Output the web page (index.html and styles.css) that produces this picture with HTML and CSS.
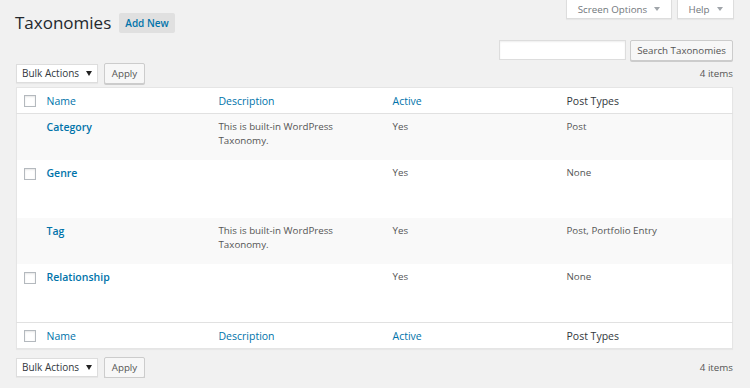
FILE: index.html
```html
<!DOCTYPE html>
<html lang="en">
<head>
    <meta charset="UTF-8">
    <title>Taxonomies</title>
    <link rel="stylesheet" href="styles.css">
</head>
<body>
    <div class="wrap">
        <div class="topbar">
            <div class="title-area">
                <h1 class="page-title">Taxonomies</h1>
                <a class="add-new" href="#">Add New</a>
            </div>
            <div class="meta-links">
                <button class="meta-tab">Screen Options <span class="caret"></span></button>
                <button class="meta-tab">Help <span class="caret"></span></button>
            </div>
        </div>

        <div class="search-row">
            <input class="search-input" type="search">
            <button class="btn search-btn">Search Taxonomies</button>
        </div>

        <div class="tablenav">
            <div class="actions">
                <span class="select">Bulk Actions</span>
                <button class="btn">Apply</button>
            </div>
            <span class="count">4 items</span>
        </div>

        <table class="list">
            <colgroup>
                <col class="col-cb">
                <col class="col-name">
                <col class="col-desc">
                <col class="col-active">
                <col>
            </colgroup>
            <thead>
                <tr>
                    <th class="cb"><span class="check"></span></th>
                    <th><a href="#">Name</a></th>
                    <th><a href="#">Description</a></th>
                    <th><a href="#">Active</a></th>
                    <th>Post Types</th>
                </tr>
            </thead>
            <tbody>
                <tr class="alt short">
                    <td class="cb"></td>
                    <td><a class="row-title" href="#">Category</a></td>
                    <td>This is built-in WordPress Taxonomy.</td>
                    <td>Yes</td>
                    <td>Post</td>
                </tr>
                <tr class="tall">
                    <td class="cb"><span class="check"></span></td>
                    <td><a class="row-title" href="#">Genre</a></td>
                    <td></td>
                    <td>Yes</td>
                    <td>None</td>
                </tr>
                <tr class="alt short">
                    <td class="cb"></td>
                    <td><a class="row-title" href="#">Tag</a></td>
                    <td>This is built-in WordPress Taxonomy.</td>
                    <td>Yes</td>
                    <td>Post, Portfolio Entry</td>
                </tr>
                <tr class="tall">
                    <td class="cb"><span class="check"></span></td>
                    <td><a class="row-title" href="#">Relationship</a></td>
                    <td></td>
                    <td>Yes</td>
                    <td>None</td>
                </tr>
            </tbody>
            <tfoot>
                <tr>
                    <th class="cb"><span class="check"></span></th>
                    <th><a href="#">Name</a></th>
                    <th><a href="#">Description</a></th>
                    <th><a href="#">Active</a></th>
                    <th>Post Types</th>
                </tr>
            </tfoot>
        </table>

        <div class="tablenav bottom">
            <div class="actions">
                <span class="select">Bulk Actions</span>
                <button class="btn">Apply</button>
            </div>
            <span class="count">4 items</span>
        </div>
    </div>
</body>
</html>
```

FILE: styles.css
```css
body{
    margin:0;
    padding:0;
    background-color:#f1f1f1;
    font-family:"Open Sans", sans-serif;
    font-size:9.75px;
    color:#555;
}

.wrap{
    padding:0 17px 0 16px;
}

.topbar{
    display:flex;
    justify-content:space-between;
    align-items:flex-start;
}
.title-area{
    display:flex;
    align-items:center;
    gap:8px;
    padding-top:13px;
}
.page-title{
    margin:0 0 0 -1px;
    font-size:17px;
    font-weight:400;
    line-height:20px;
    color:#23282d;
}
.add-new{
    display:block;
    height:20px;
    line-height:20px;
    padding:0 6px;
    background-color:#e0e0e0;
    border-radius:2px;
    color:#0073aa;
    font-size:10px;
    font-weight:600;
    text-decoration:none;
}

.meta-links{
    display:flex;
    gap:5px;
    margin-right:-1px;
}
.meta-tab{
    height:19px;
    padding:0;
    background-color:#fff;
    border:1px solid #ddd;
    border-top:none;
    font-family:"Open Sans", sans-serif;
    font-size:9.75px;
    color:#72777c;
    white-space:nowrap;
    display:flex;
    justify-content:center;
    align-items:center;
    gap:7px;
    box-shadow:0 1px 1px rgba(0,0,0,0.04);
}
.meta-tab:first-child{
    width:106px;
}
.meta-tab:last-child{
    width:57px;
}
.caret{
    width:0;
    height:0;
    border-left:3px solid transparent;
    border-right:3px solid transparent;
    border-top:4px solid #a0a5aa;
}

.search-row{
    display:flex;
    justify-content:flex-end;
    gap:4px;
    margin-top:7px;
}
.search-input{
    width:127px;
    height:20px;
    box-sizing:border-box;
    margin:0;
    border:1px solid #ddd;
    background-color:#fff;
    box-shadow:inset 0 1px 2px rgba(0,0,0,0.07);
}
.btn{
    height:21px;
    margin:0;
    padding:0 7px;
    background-color:#f7f7f7;
    border:1px solid #ccc;
    border-radius:2px;
    box-shadow:0 1px 0 #ccc;
    font-family:"Open Sans", sans-serif;
    font-size:9.75px;
    color:#555;
    white-space:nowrap;
}
.search-btn{
    width:103px;
    padding:0;
}

.tablenav{
    display:flex;
    justify-content:space-between;
    align-items:center;
    margin-top:2px;
    height:21px;
}
.tablenav.bottom{
    margin-top:8px;
}
.actions{
    display:flex;
    align-items:center;
    gap:6px;
}
.select{
    position:relative;
    width:82px;
    height:19px;
    box-sizing:border-box;
    padding-left:5px;
    line-height:17px;
    background-color:#fff;
    border:1px solid #ddd;
    box-shadow:0 1px 1px rgba(0,0,0,0.04);
    color:#32373c;
    font-size:10px;
}
.select::after{
    content:"";
    position:absolute;
    right:5px;
    top:6px;
    border-left:3px solid transparent;
    border-right:3px solid transparent;
    border-top:5px solid #222;
}
.actions .btn{
    width:41px;
    padding:0;
}
.count{
    color:#555;
}

.list{
    width:100%;
    margin-top:3px;
    border-collapse:collapse;
    table-layout:fixed;
    background-color:#fff;
    border:1px solid #e5e5e5;
    box-shadow:0 1px 1px rgba(0,0,0,0.04);
}
.col-cb{
    width:23px;
}
.col-name{
    width:172px;
}
.col-desc{
    width:174px;
}
.col-active{
    width:174px;
}
.list th,
.list td{
    padding:0 7px;
    text-align:left;
    vertical-align:top;
}
.list th{
    height:24px;
    vertical-align:middle;
    font-size:10.5px;
    font-weight:400;
    color:#32373c;
}
.list th a{
    color:#0073aa;
    text-decoration:none;
}
.list thead th{
    border-bottom:1px solid #e1e1e1;
}
.list tfoot th{
    border-top:1px solid #e1e1e1;
}
.list td{
    padding-top:6px;
    line-height:14px;
}
.list .cb{
    padding:0 0 0 7px;
}
.list td.cb{
    padding-top:8px;
}
.list th.cb{
    padding-top:1px;
}
.check{
    display:block;
    width:12px;
    height:12px;
    box-sizing:border-box;
    border:1px solid #b4b9be;
    background-color:#fff;
    box-shadow:inset 0 1px 2px rgba(0,0,0,0.1);
}
tr.alt{
    background-color:#f9f9f9;
}
tr.short td{
    height:38px;
}
tr.tall td{
    height:52px;
}
.tall td.cb{
    height:50px;
}
.row-title{
    font-size:10.5px;
    font-weight:600;
    color:#0073aa;
    text-decoration:none;
}
```
